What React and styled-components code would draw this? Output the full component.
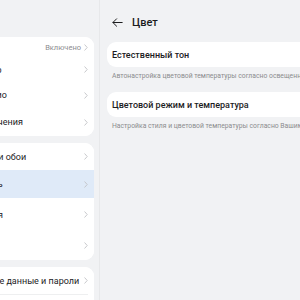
import React from 'react';
import styled, { createGlobalStyle } from 'styled-components';

const GlobalStyle = createGlobalStyle`
    html, body {
        margin: 0;
        padding: 0;
        background: #f1f2f4;
        overflow: hidden;
    }
    * {
        box-sizing: border-box;
    }
`;

const Screen = styled.div`
    width: 300px;
    height: 300px;
    display: flex;
    overflow: hidden;
    font-family: Roboto, "Noto Sans", sans-serif;
    background: #f1f2f4;
`;

const Sidebar = styled.div`
    width: 100px;
    flex: none;
    overflow: hidden;
    border-right: 1px solid #e7e8ea;
`;

const SidebarInner = styled.div`
    width: 177px;
    margin-left: -83px;
    padding-top: 37px;
    display: flex;
    flex-direction: column;
    gap: 7px;
`;

const Group = styled.div`
    background: #fff;
    border-radius: 9px;
    overflow: hidden;
`;

const Row = styled.div`
    height: ${({ h }) => h}px;
    display: flex;
    align-items: center;
    padding: 0 6px 0 16px;
    background: ${({ active }) => (active ? '#dfeaf8' : '#fff')};
    position: relative;

    & + &::before {
        content: '';
        position: absolute;
        top: 0;
        left: 16px;
        right: 6px;
        height: 1px;
        background: #eeeff0;
    }
`;

const Label = styled.span`
    flex: 1;
    font-size: 9px;
    color: #1c1c1e;
    white-space: nowrap;
`;

const Value = styled.span`
    font-size: 7.5px;
    color: #8d8d8f;
    margin-right: 3px;
`;

const Chevron = () => (
    <svg width="4" height="7" viewBox="0 0 4 7">
        <path d="M0.8 0.8 L3.2 3.5 L0.8 6.2" fill="none" stroke="#c2c3c6" strokeWidth="0.9" strokeLinecap="round" />
    </svg>
);

const Main = styled.div`
    flex: 1;
    overflow: hidden;
    padding-left: 7px;
`;

const Header = styled.div`
    height: 40px;
    display: flex;
    align-items: center;
    gap: 9px;
    padding: 0 0 0 5px;
    margin-top: 2px;
`;

const Title = styled.span`
    font-size: 11px;
    font-weight: 500;
    color: #1c1c1e;
`;

const Card = styled.div`
    width: 260px;
    height: 25px;
    background: #fff;
    border-radius: 9px;
    display: flex;
    align-items: center;
    padding-left: 5px;
    font-size: 9px;
    font-weight: 500;
    color: #1c1c1e;
`;

const Hint = styled.div`
    font-size: 6.8px;
    color: #8b8c8e;
    white-space: nowrap;
    padding: 5px 0 0 5px;
    height: 25px;
`;

const sidebar = [
    [
        { label: 'Bluetooth', value: 'Включено', h: 20 },
        { label: 'Гостевой роутер', h: 25 },
        { label: 'Проводное аудио', h: 26 },
        { label: 'Другие подключения', h: 28 },
    ],
    [
        { label: 'Рабочий экран и обои', h: 27 },
        { label: 'Экран и яркость', h: 28, active: true },
        { label: 'Звук и вибрация', h: 33 },
        { label: 'Уведомления', h: 29 },
    ],
    [
        { label: 'Биометрические данные и пароли', h: 27 },
        { label: 'Приложения', h: 27 },
    ],
];

const options = [
    { title: 'Естественный тон', hint: 'Автонастройка цветовой температуры согласно освещенности' },
    { title: 'Цветовой режим и температура', hint: 'Настройка стиля и цветовой температуры согласно Вашим предпочтениям' },
];

const App = () => {
    return (
        <Screen>
            <GlobalStyle />
            <Sidebar>
                <SidebarInner>
                    {sidebar.map((group, i) => (
                        <Group key={i}>
                            {group.map((item) => (
                                <Row key={item.label} h={item.h} active={item.active}>
                                    <Label>{item.label}</Label>
                                    {item.value && <Value>{item.value}</Value>}
                                    <Chevron />
                                </Row>
                            ))}
                        </Group>
                    ))}
                </SidebarInner>
            </Sidebar>
            <Main>
                <Header>
                    <svg width="11" height="9" viewBox="0 0 11 9">
                        <path d="M10.2 4.5 H1 M4.6 0.8 L0.9 4.5 L4.6 8.2" fill="none" stroke="#1c1c1e" strokeWidth="1" strokeLinecap="round" strokeLinejoin="round" />
                    </svg>
                    <Title>Цвет</Title>
                </Header>
                {options.map((o) => (
                    <div key={o.title}>
                        <Card>{o.title}</Card>
                        <Hint>{o.hint}</Hint>
                    </div>
                ))}
            </Main>
        </Screen>
    );
};

export default App;
